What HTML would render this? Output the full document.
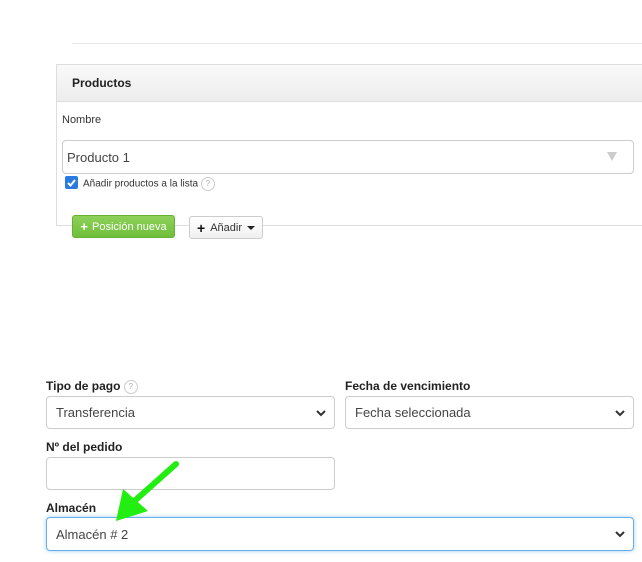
<!DOCTYPE html>
<html><head><meta charset="utf-8"><style>
*{box-sizing:border-box;margin:0;padding:0}
body{width:642px;height:562px;background:#fff;font-family:"Liberation Sans",Arial,sans-serif;color:#333;position:relative;overflow:hidden}
.a{position:absolute}
.lbl{font-size:12px;font-weight:bold;color:#222}
.sel{border:1px solid #ccc;border-radius:4px;font-size:13px;color:#444;padding-left:9px;display:flex;align-items:center;background:#fff}
.chev{position:absolute;right:8px;top:50%;margin-top:-4px}
.q{display:inline-block;width:14px;height:14px;border:1px solid #ccc;border-radius:50%;font-size:8px;color:#aaa;text-align:center;line-height:12px;font-weight:normal;vertical-align:middle}
</style></head><body>
<div class="a" style="left:72px;top:43px;width:570px;height:1px;background:#e8e8e8"></div>
<div class="a" style="left:56px;top:64px;width:600px;height:162px;border:1px solid #ddd;border-right:none"></div>
<div class="a" style="left:57px;top:65px;width:590px;height:37px;background:linear-gradient(#f9f9f9,#ededed);border-bottom:1px solid #ddd"></div>
<div class="a lbl" style="left:72px;top:76px;font-size:12px">Productos</div>
<div class="a" style="left:62px;top:114px;font-size:11px;color:#333">Nombre</div>
<div class="a sel" style="left:62px;top:140px;width:572px;height:34px;padding-left:4px;font-size:13px;color:#444">Producto 1<span class="a" style="right:16px;top:11px;width:0;height:0;border-left:5px solid transparent;border-right:5px solid transparent;border-top:9px solid #ccc"></span></div>
<div class="a" style="left:65px;top:176px;width:13px;height:13px;background:#2a7ae2;border-radius:2px"><svg width="13" height="13"><path d="M3 7l2.5 2.5L10 4" stroke="#fff" stroke-width="2" fill="none"/></svg></div>
<div class="a" style="left:83px;top:177px;font-size:10px;color:#333">Añadir productos a la lista <span class="q">?</span></div>
<div class="a" style="left:72px;top:215px;width:103px;height:23px;background:linear-gradient(#8ed05a,#6fbf3a);border:1px solid #66b034;border-radius:3px;color:#fff;font-size:11px;display:flex;align-items:center;justify-content:center"><b style="font-size:13px;margin-right:4px">+</b>Posición nueva</div>
<div class="a" style="left:189px;top:216px;width:74px;height:23px;background:linear-gradient(#fff,#f0f0f0);border:1px solid #ccc;border-radius:3px;color:#333;font-size:11px;display:flex;align-items:center;justify-content:center"><b style="font-size:14px;margin-right:5px;color:#111">+</b>Añadir<span style="margin-left:5px;border-left:4px solid transparent;border-right:4px solid transparent;border-top:4px solid #222"></span></div>

<div class="a lbl" style="left:46px;top:379px">Tipo de pago <span class="q">?</span></div>
<div class="a sel" style="left:46px;top:396px;width:289px;height:33px">Transferencia<svg class="chev" width="10" height="8"><path d="M1 2l4 4 4-4" stroke="#333" stroke-width="2" fill="none"/></svg></div>
<div class="a lbl" style="left:345px;top:379px">Fecha de vencimiento</div>
<div class="a sel" style="left:345px;top:396px;width:289px;height:33px">Fecha seleccionada<svg class="chev" width="10" height="8"><path d="M1 2l4 4 4-4" stroke="#333" stroke-width="2" fill="none"/></svg></div>
<div class="a lbl" style="left:46px;top:440px">Nº del pedido</div>
<div class="a sel" style="left:46px;top:457px;width:289px;height:33px"></div>
<div class="a lbl" style="left:46px;top:501px">Almacén</div>
<div class="a sel" style="left:46px;top:517px;width:588px;height:34px;border-color:#66afe9;box-shadow:0 0 4px rgba(102,175,233,.6)">Almacén # 2<svg class="chev" width="10" height="8"><path d="M1 2l4 4 4-4" stroke="#333" stroke-width="2" fill="none"/></svg></div>
<svg class="a" style="left:100px;top:455px" width="90" height="75"><path d="M76 9L30 50" stroke="#22ee11" stroke-width="6" stroke-linecap="round"/><path d="M16 66L23 34L48 56Z" fill="#22ee11"/></svg>
</body></html>
